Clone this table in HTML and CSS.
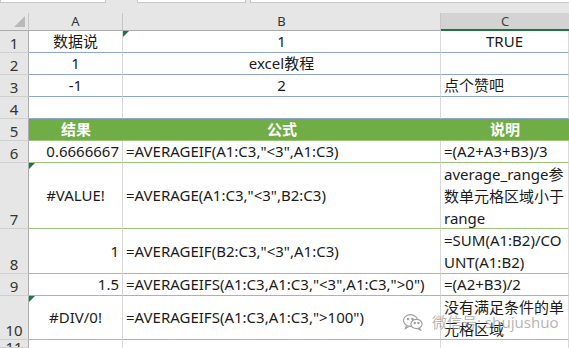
FILE: index.html
```html
<!DOCTYPE html>
<html lang="zh">
<head>
<meta charset="utf-8">
<link rel="stylesheet" href="styles.css">
</head>
<body>
<div class="topbar">
  <div class="fbox fbox1"></div>
  <div class="fbox fbox2"></div>
  <div class="fbox fbox3"></div>
</div>
<div class="sheet">
  <div class="corner"><span class="corner-tri"></span></div>
  <div class="colh">A</div>
  <div class="colh">B</div>
  <div class="colh colh-sel">C</div>

  <div class="rowh">1</div>
  <div class="cell blue center">数据说</div>
  <div class="cell blue center mark">1</div>
  <div class="cell blue center">TRUE</div>

  <div class="rowh">2</div>
  <div class="cell blue center">1</div>
  <div class="cell blue center">excel教程</div>
  <div class="cell blue"></div>

  <div class="rowh">3</div>
  <div class="cell blue center">-1</div>
  <div class="cell blue center">2</div>
  <div class="cell blue left">点个赞吧</div>

  <div class="rowh">4</div>
  <div class="cell blue"></div>
  <div class="cell blue"></div>
  <div class="cell blue"></div>

  <div class="rowh">5</div>
  <div class="cell head center">结果</div>
  <div class="cell head center">公式</div>
  <div class="cell head center">说明</div>

  <div class="rowh">6</div>
  <div class="cell green right">0.6666667</div>
  <div class="cell green left">=AVERAGEIF(A1:C3,"&lt;3",A1:C3)</div>
  <div class="cell green left">=(A2+A3+B3)/3</div>

  <div class="rowh">7</div>
  <div class="cell green center mid mark">#VALUE!</div>
  <div class="cell green left mid">=AVERAGE(A1:C3,"&lt;3",B2:C3)</div>
  <div class="cell green left wrap">average_range参<br>数单元格区域小于<br>range</div>

  <div class="rowh">8</div>
  <div class="cell green right mid">1</div>
  <div class="cell green left mid">=AVERAGEIF(B2:C3,"&lt;3",A1:C3)</div>
  <div class="cell green left wrap">=SUM(A1:B2)/CO<br>UNT(A1:B2)</div>

  <div class="rowh">9</div>
  <div class="cell green right">1.5</div>
  <div class="cell green left">=AVERAGEIFS(A1:C3,A1:C3,"&lt;3",A1:C3,"&gt;0")</div>
  <div class="cell green left">=(A2+B3)/2</div>

  <div class="rowh">10</div>
  <div class="cell green center mid mark">#DIV/0!</div>
  <div class="cell green left mid">=AVERAGEIFS(A1:C3,A1:C3,"&gt;100")</div>
  <div class="cell green left wrap">没有满足条件的单<br>元格区域</div>

  <div class="rowh">11</div>
  <div class="cell plain"></div>
  <div class="cell plain"></div>
  <div class="cell plain"></div>
</div>
<div class="watermark">
  <svg class="wm-icon" width="22" height="18" viewBox="0 0 22 18" fill="none" stroke="#a0a0a0" stroke-width="1.2">
    <ellipse cx="8.5" cy="7.5" rx="7" ry="5.8"/>
    <path d="M4.5 12.5 L3.5 15.5 L7 13.2"/>
    <ellipse cx="14.5" cy="11" rx="5.6" ry="4.6" fill="#ffffff"/>
    <path d="M17.5 15 L18.5 17 L15.8 15.6"/>
    <circle cx="6" cy="6" r="0.7" fill="#a0a0a0"/>
    <circle cx="10.5" cy="6" r="0.7" fill="#a0a0a0"/>
    <circle cx="12.8" cy="10" r="0.6" fill="#a0a0a0"/>
    <circle cx="16.4" cy="10" r="0.6" fill="#a0a0a0"/>
  </svg>
  <span class="wm-text">微信号: shujushuo</span>
</div>
</body>
</html>
```
FILE: styles.css
```css
* { box-sizing: border-box; }
html, body { margin: 0; padding: 0; background: #ffffff; }
body {
  width: 569px;
  height: 348px;
  overflow: hidden;
  position: relative;
  font-family: "Noto Sans", "Noto Sans CJK SC", sans-serif;
  color: #1a1a1a;
}
.topbar {
  height: 13px;
  background: #e6e6e6;
  display: flex;
  align-items: flex-start;
}
.fbox {
  height: 3px;
  background: #ffffff;
  border: 1px solid #c8c8c8;
  border-top: none;
}
.fbox1 { width: 106px; }
.fbox2 { width: 109px; margin-left: 31px; }
.fbox3 { flex: 1; margin-left: 4px; border-right: none; }

.sheet {
  display: grid;
  grid-template-columns: 29px 94px 318px 128px;
  grid-template-rows: 18px 22px 22px 22px 22px 22px 22px 66px 45px 22px 44px 8px;
  overflow: hidden;
}
.corner {
  background: #e6e6e6;
  border-right: 1px solid #c6c6c6;
  border-bottom: 1px solid #ababab;
  position: relative;
}
.corner-tri {
  position: absolute;
  right: 3px;
  bottom: 3px;
  width: 0;
  height: 0;
  border-left: 11px solid transparent;
  border-bottom: 11px solid #b9b9b9;
}
.colh {
  background: #e6e6e6;
  border-right: 1px solid #c6c6c6;
  border-bottom: 1px solid #ababab;
  font-size: 13px;
  line-height: 17px;
  text-align: center;
  color: #333333;
}
.colh-sel {
  background: #d3d3d3;
  border-bottom: 2px solid #217346;
  border-right: none;
  color: #444444;
}
.rowh {
  background: #e6e6e6;
  border-right: 1px solid #ababab;
  border-bottom: 1px solid #d0d0d0;
  font-size: 15px;
  line-height: 18px;
  color: #333333;
  display: flex;
  align-items: flex-end;
  justify-content: center;
  overflow: hidden;
}
.rowh:nth-last-child(4) {
  align-items: flex-start;
  line-height: 14px;
}
.cell {
  border-right: 1px solid #d9d9d9;
  font-size: 15px;
  line-height: 20px;
  display: flex;
  align-items: flex-end;
  padding: 0 3px 1px 3px;
  white-space: nowrap;
  position: relative;
}
.cell.center { justify-content: center; }
.cell.left { justify-content: flex-start; }
.cell.right { justify-content: flex-end; }
.cell.mid { align-items: center; }
.cell.wrap {
  white-space: normal;
  line-height: 22px;
  align-items: center;
  padding-bottom: 0;
}
.blue { border-bottom: 1px solid #8ea6cc; }
.green { border-bottom: 1px solid #9cc47a; }
.plain { border-bottom: none; }
.head {
  background: #70ad47;
  color: #ffffff;
  font-weight: bold;
  border-bottom: 1px solid #9cc47a;
  border-right: none;
}
.mark::before {
  content: "";
  position: absolute;
  left: 0;
  top: 0;
  width: 0;
  height: 0;
  border-top: 6px solid #217346;
  border-right: 6px solid transparent;
}
.watermark {
  position: absolute;
  left: 402px;
  top: 312px;
  display: flex;
  align-items: center;
  gap: 8px;
  white-space: nowrap;
}
.wm-text {
  font-size: 15px;
  line-height: 20px;
  color: rgba(150, 150, 150, 0.7);
}
```
